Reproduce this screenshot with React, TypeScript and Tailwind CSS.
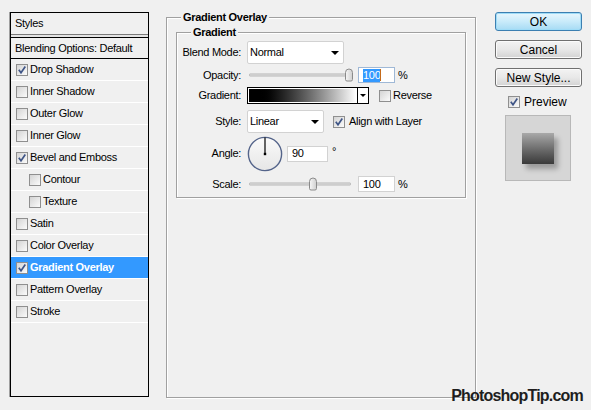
import React from "react";

function Check({ checked }: { checked?: boolean }) {
  return (
    <span className="w-[12px] h-[12px] shrink-0 border border-[#8f8f8f] bg-linear-to-br from-[#d4d4d4] to-[#fbfbfb] flex items-center justify-center">
      {checked && (
        <svg width="10" height="10" viewBox="0 0 10 10">
          <path d="M1.8 4.8 L4 7.8 L8.3 1.6" stroke="#3f5586" strokeWidth="1.7" fill="none" />
        </svg>
      )}
    </span>
  );
}

const rows: { label: string; checked?: boolean; indent?: boolean; active?: boolean }[] = [
  { label: "Drop Shadow", checked: true },
  { label: "Inner Shadow" },
  { label: "Outer Glow" },
  { label: "Inner Glow" },
  { label: "Bevel and Emboss", checked: true },
  { label: "Contour", indent: true },
  { label: "Texture", indent: true },
  { label: "Satin" },
  { label: "Color Overlay" },
  { label: "Gradient Overlay", checked: true, active: true },
  { label: "Pattern Overlay" },
  { label: "Stroke" },
];

function Arrow() {
  return (
    <svg width="8" height="4" viewBox="0 0 8 4">
      <path d="M0 0 H8 L4 4 Z" fill="#000" />
    </svg>
  );
}

function Slider({ thumb }: { thumb: number }) {
  return (
    <div className="relative ml-[8px] w-[104px] h-full">
      <div className="absolute left-0 right-[2px] top-1/2 -translate-y-1/2 h-[3px] border border-[#b5b5b5] bg-[#e6e6e6] rounded-[1px]" />
      <div
        className="absolute top-1/2 -translate-y-1/2 w-[8px] h-[13px] rounded-t-[4px] rounded-b-[2px] border border-[#8a8a8a] bg-linear-to-r from-[#f4f4f4] to-[#d2d2d2]"
        style={{ left: thumb }}
      />
    </div>
  );
}

function Label({ children }: { children: React.ReactNode }) {
  return <div className="w-[64px] text-right shrink-0">{children}</div>;
}

export default function App() {
  return (
    <div
      className="relative w-[591px] h-[410px] bg-[#f0f0f0] flex items-start text-[11px] tracking-[-0.3px] text-black overflow-hidden"
      style={{ fontFamily: '"Liberation Sans", Arial, sans-serif' }}
    >
      {/* Left styles panel */}
      <div className="ml-[9px] mt-[12px] w-[140px] h-[385px] border-l border-[#a0a0a0]">
        <div className="w-[139px] h-full border border-black flex flex-col">
          <div className="h-[21px] flex items-center pl-[4px]">Styles</div>
          <div className="h-px bg-[#7a7a7a]" />
          <div className="h-[2px] bg-[#e4e4e4]" />
          <div className="h-px bg-black" />
          <div className="h-[21px] flex items-center pl-[4px] border-b border-black">Blending Options: Default</div>
          {rows.map((r) => (
            <div
              key={r.label}
              className={`h-[22px] flex items-center gap-[2px] border-b border-white ${r.indent ? "pl-[18px]" : "pl-[5px]"} ${r.active ? "bg-[#3399ff] text-white font-bold" : ""}`}
            >
              <Check checked={r.checked} />
              <span>{r.label}</span>
            </div>
          ))}
        </div>
      </div>

      {/* Middle group */}
      <div className="relative ml-[17px] mt-[17px] w-[310px] h-[381px] border border-[#a0a0a0] shadow-[inset_1px_1px_0_#fff,1px_1px_0_#fff]">
        <span className="absolute left-[14px] -top-[8px] px-[2px] bg-[#f0f0f0] font-bold leading-[14px]">Gradient Overlay</span>
        <div className="relative mx-[9px] mt-[14px] h-[166px] border border-[#a0a0a0] shadow-[inset_1px_1px_0_#fff,1px_1px_0_#fff] flex flex-col">
          <span className="absolute left-[14px] -top-[8px] px-[2px] bg-[#f0f0f0] font-bold leading-[14px]">Gradient</span>

          {/* Blend Mode */}
          <div className="mt-[8px] h-[23px] flex items-center">
            <Label>Blend Mode:</Label>
            <div className="ml-[6px] w-[97px] h-[23px] bg-white border border-[#d2d2d2] rounded-[2px] flex items-center justify-between pl-[2px] pr-[4px]">
              <span>Normal</span>
              <Arrow />
            </div>
          </div>

          {/* Opacity */}
          <div className="mt-[3px] h-[16px] flex items-center">
            <Label>Opacity:</Label>
            <Slider thumb={96} />
            <div className="ml-[5px] w-[37px] h-[16px] bg-white border border-[#9fb8d6] flex items-center pl-[4px]">
              <span className="bg-[#3399ff] text-white leading-[13px]">100</span>
              <span className="w-px h-[12px] bg-[#c46a1a]" />
            </div>
            <span className="ml-[3px]">%</span>
          </div>

          {/* Gradient */}
          <div className="mt-[4px] h-[17px] flex items-center">
            <Label>Gradient:</Label>
            <div className="ml-[6px] w-[122px] h-[17px] border border-black flex">
              <div className="flex-1 border border-white bg-linear-to-r from-[#000000] from-[8%] to-[#ffffff]" />
              <div className="w-[11px] border-l border-black bg-white flex items-center justify-center">
                <svg width="6" height="3" viewBox="0 0 6 3">
                  <path d="M0 0 H6 L3 3 Z" fill="#000" />
                </svg>
              </div>
            </div>
            <div className="ml-[10px]">
              <Check />
            </div>
            <span className="ml-[2px]">Reverse</span>
          </div>

          {/* Style */}
          <div className="mt-[6px] h-[23px] flex items-center">
            <Label>Style:</Label>
            <div className="ml-[6px] w-[77px] h-[23px] bg-white border border-[#d2d2d2] rounded-[2px] flex items-center justify-between pl-[2px] pr-[4px]">
              <span>Linear</span>
              <Arrow />
            </div>
            <div className="ml-[9px]">
              <Check checked />
            </div>
            <span className="ml-[4px]">Align with Layer</span>
          </div>

          {/* Angle */}
          <div className="mt-[3px] h-[35px] flex items-center">
            <Label>Angle:</Label>
            <svg className="ml-[6px] shrink-0" width="36" height="36" viewBox="0 0 36 36">
              <defs>
                <linearGradient id="dialg" x1="0" y1="0" x2="0" y2="1">
                  <stop offset="0" stopColor="#fafafa" />
                  <stop offset="1" stopColor="#e6e6e6" />
                </linearGradient>
              </defs>
              <circle cx="18" cy="18" r="16.6" fill="url(#dialg)" stroke="#54648a" strokeWidth="1.4" />
              <line x1="18" y1="18" x2="18" y2="1.5" stroke="#000" strokeWidth="1.2" />
              <rect x="16.8" y="16.8" width="2.4" height="2.4" fill="#000" />
            </svg>
            <div className="ml-[4px] w-[41px] h-[16px] bg-white border border-[#d2d2d2] flex items-center pl-[4px]">90</div>
            <span className="ml-[4px] self-start mt-[7px]">°</span>
          </div>

          {/* Scale */}
          <div className="mt-[5px] h-[16px] flex items-center">
            <Label>Scale:</Label>
            <Slider thumb={60} />
            <div className="ml-[5px] w-[37px] h-[16px] bg-white border border-[#d2d2d2] flex items-center pl-[4px]">100</div>
            <span className="ml-[3px]">%</span>
          </div>
        </div>
      </div>

      {/* Right column */}
      <div className="ml-[19px] mt-[12px] w-[87px] flex flex-col text-[12px] tracking-normal">
        <div className="h-[19px] rounded-[3px] border border-[#3c7fb1] shadow-[inset_0_0_0_1px_#9fdcf7] bg-linear-to-b from-[#e8f6fd] via-[#c9ebfa] to-[#a6dbf4] flex items-center justify-center">
          OK
        </div>
        <div className="mt-[9px] h-[19px] rounded-[3px] border border-[#707070] shadow-[inset_0_0_0_1px_#fbfbfb] bg-linear-to-b from-[#f3f3f3] via-[#e8e8e8] to-[#d3d3d3] flex items-center justify-center">
          Cancel
        </div>
        <div className="mt-[9px] h-[19px] rounded-[3px] border border-[#707070] shadow-[inset_0_0_0_1px_#fbfbfb] bg-linear-to-b from-[#f3f3f3] via-[#e8e8e8] to-[#d3d3d3] flex items-center justify-center">
          New Style...
        </div>
        <div className="mt-[9px] h-[12px] flex items-center ml-[13px] gap-[4px]">
          <Check checked />
          <span>Preview</span>
        </div>
        <div className="mt-[7px] ml-[10px] w-[66px] h-[66px] border border-[#b8b8b8] bg-[#d6d6d6] pl-[16px] pt-[17px]">
          <div className="w-[32px] h-[31px] bg-linear-to-b from-[#a9a9a9] to-[#3a3a3a] shadow-[4px_5px_5px_rgba(0,0,0,0.28)]" />
        </div>
      </div>

      {/* Watermark */}
      <div className="absolute right-[8px] bottom-[4px] text-[16px] font-bold tracking-[-0.8px] text-[#1e1e1e] leading-[20px]">
        PhotoshopTip.com
      </div>
    </div>
  );
}
